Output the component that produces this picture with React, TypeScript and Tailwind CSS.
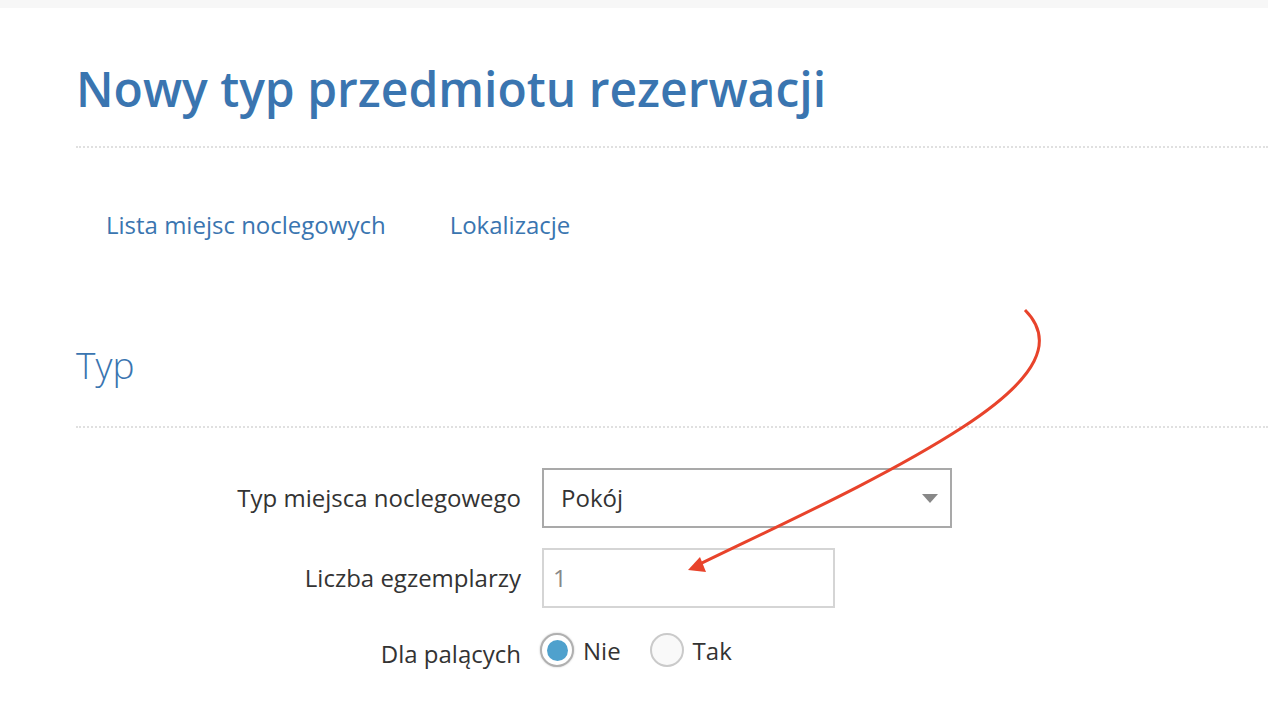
import React from 'react'

const blue = 'text-[#3a75b0]'

function Radio({ checked, label }: { checked: boolean; label: string }) {
  return (
    <label className="flex items-center gap-[9px]">
      <span
        className={`flex h-[34px] w-[34px] items-center justify-center rounded-full border-2 ${
          checked ? 'border-[#b0b0b0] bg-white shadow-[0_0_2px_rgba(0,0,0,0.25)]' : 'border-[#cacaca] bg-[#f9f9f9]'
        }`}
      >
        {checked && <span className="h-[21px] w-[21px] rounded-full bg-[#4fa1cd]" />}
      </span>
      <span className="text-[24px] leading-[33px] text-[#333]">{label}</span>
    </label>
  )
}

export default function App() {
  return (
    <div
      className="relative h-[712px] w-full overflow-hidden bg-white"
      style={{ fontFamily: '"Open Sans", "Noto Sans", sans-serif' }}
    >
      <div className="h-[8px] bg-[#f7f7f7]" />

      <div className="pl-[76px]">
        <div className="mt-[48px] border-b-2 border-dotted border-[#e0e0e0] pb-[24px]">
          <h1 className={`text-[48px] font-semibold leading-[66px] ${blue}`}>
            Nowy typ przedmiotu rezerwacji
          </h1>
        </div>

        <nav className="mt-[60px] flex text-[24px] leading-[33px]">
          <a className={`pl-[30px] pr-[29px] ${blue}`}>Lista miejsc noclegowych</a>
          <a className={`px-[35px] ${blue}`}>Lokalizacje</a>
        </nav>

        <div className="mt-[99px] border-b-2 border-dotted border-[#e0e0e0] pb-[36px]">
          <h2 className={`text-[37px] font-light leading-[50px] ${blue}`}>Typ</h2>
        </div>

        <div className="mt-[40px] grid grid-cols-[445px_1fr] gap-x-[21px] gap-y-[20px] text-[24px] text-[#333]">
          <div className="flex h-[60px] items-center justify-end">Typ miejsca noclegowego</div>
          <div className="flex h-[60px] w-[410px] items-center justify-between border-2 border-[#a9a9a9] pl-[17px] pr-[12px]">
            <span>Pokój</span>
            <svg width="16" height="9" viewBox="0 0 16 9">
              <path d="M0 0 H16 L8 9 Z" fill="#888" />
            </svg>
          </div>

          <div className="flex h-[60px] items-center justify-end">Liczba egzemplarzy</div>
          <div className="flex h-[60px] w-[293px] items-center border-2 border-[#d5d5d5] pl-[9px] text-[#888]">1</div>

          <div className="flex h-[44px] justify-end pt-[9px] leading-[33px]">Dla palących</div>
          <div className="-ml-[2px] flex h-[44px] items-center gap-[29px]">
            <Radio checked label="Nie" />
            <Radio checked={false} label="Tak" />
          </div>
        </div>
      </div>

      <svg className="pointer-events-none absolute left-0 top-0" width="1268" height="712">
        <path
          d="M1025 310 C1055 340 1040 377 963 427 S780 525 700 564"
          fill="none"
          stroke="#e8432b"
          strokeWidth="3"
        />
        <path d="M688 570 L706 572 L700 557 Z" fill="#e8432b" />
      </svg>
    </div>
  )
}
